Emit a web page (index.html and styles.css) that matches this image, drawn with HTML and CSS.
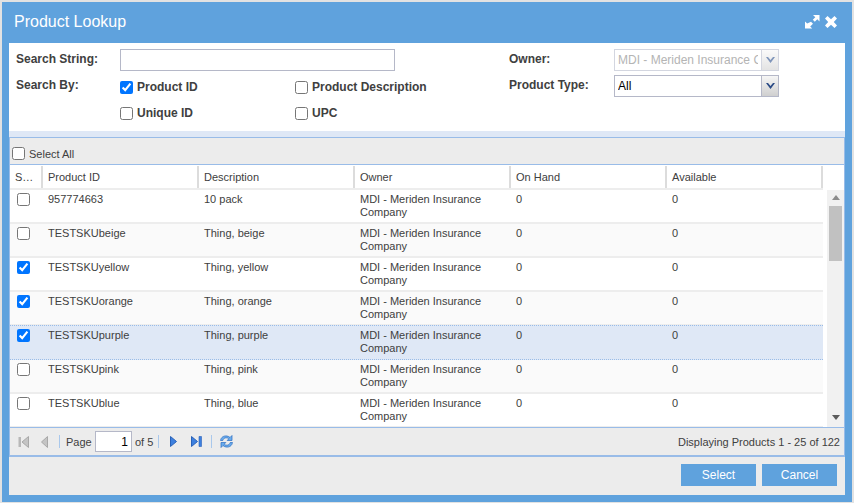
FILE: index.html
```html
<!DOCTYPE html>
<html lang="en">
<head>
<meta charset="utf-8">
<title>Product Lookup</title>
<link rel="stylesheet" href="styles.css">
</head>
<body>
<div class="window">
  <header class="titlebar">
    <h1 class="title">Product Lookup</h1>
    <div class="tools">
      <svg class="tool-expand" width="16" height="16" viewBox="0 0 16 16"><path d="M9 1h6.500v6.500l-2.200-2.200-2.500 2.500-2-2 2.500-2.500zM7 7.800l2 2-2.800 2.800 2 2H1v-7.200l2.200 2.200z" fill="#fff"/></svg>
      <svg class="tool-close" width="12" height="12" viewBox="0 0 12 12"><path d="M2.500 0 6 3.200 9.500 0 12 2.500 8.800 6 12 9.500 9.500 12 6 8.800 2.500 12 0 9.500 3.200 6 0 2.500z" fill="#fff"/></svg>
    </div>
  </header>
  <div class="body">
    <form class="form">
      <div class="form-left">
        <label class="lbl lbl-top">Search String:</label>
        <input class="text-input" type="text">
        <span></span>
        <label class="lbl lbl-by">Search By:</label>
        <label class="check"><input type="checkbox" checked>Product ID</label>
        <label class="check"><input type="checkbox">Product Description</label>
        <span></span>
        <label class="check"><input type="checkbox">Unique ID</label>
        <label class="check"><input type="checkbox">UPC</label>
      </div>
      <div class="form-right">
        <label class="lbl lbl-top">Owner:</label>
        <div class="combo combo-off"><span class="combo-text">MDI - Meriden Insurance Company</span><span class="combo-btn"><svg width="9" height="6" viewBox="0 0 9 6"><path d="M0 0h2l2.500 3L7 0h2L4.500 6z" fill="#7f95ba"/></svg></span></div>
        <label class="lbl lbl-top">Product Type:</label>
        <div class="combo"><span class="combo-text">All</span><span class="combo-btn"><svg width="9" height="6" viewBox="0 0 9 6"><path d="M0 0h2l2.500 3L7 0h2L4.500 6z" fill="#2a4a85"/></svg></span></div>
      </div>
    </form>
    <section class="grid">
      <div class="grid-top"><label class="select-all"><input type="checkbox">Select All</label></div>
      <div class="head">
        <div class="hc hc-s">S…</div><div class="hc">Product ID</div><div class="hc">Description</div><div class="hc">Owner</div><div class="hc">On Hand</div><div class="hc">Available</div>
      </div>
      <div class="grid-main">
        <div class="rows">
          <div class="row"><div class="c c-s"><input type="checkbox"></div><div class="c">957774663</div><div class="c">10 pack</div><div class="c">MDI - Meriden Insurance Company</div><div class="c">0</div><div class="c">0</div></div>
          <div class="row row-alt"><div class="c c-s"><input type="checkbox"></div><div class="c">TESTSKUbeige</div><div class="c">Thing, beige</div><div class="c">MDI - Meriden Insurance Company</div><div class="c">0</div><div class="c">0</div></div>
          <div class="row"><div class="c c-s"><input type="checkbox" checked></div><div class="c">TESTSKUyellow</div><div class="c">Thing, yellow</div><div class="c">MDI - Meriden Insurance Company</div><div class="c">0</div><div class="c">0</div></div>
          <div class="row row-alt"><div class="c c-s"><input type="checkbox" checked></div><div class="c">TESTSKUorange</div><div class="c">Thing, orange</div><div class="c">MDI - Meriden Insurance Company</div><div class="c">0</div><div class="c">0</div></div>
          <div class="row row-sel"><div class="c c-s"><input type="checkbox" checked></div><div class="c">TESTSKUpurple</div><div class="c">Thing, purple</div><div class="c">MDI - Meriden Insurance Company</div><div class="c">0</div><div class="c">0</div></div>
          <div class="row row-alt"><div class="c c-s"><input type="checkbox"></div><div class="c">TESTSKUpink</div><div class="c">Thing, pink</div><div class="c">MDI - Meriden Insurance Company</div><div class="c">0</div><div class="c">0</div></div>
          <div class="row"><div class="c c-s"><input type="checkbox"></div><div class="c">TESTSKUblue</div><div class="c">Thing, blue</div><div class="c">MDI - Meriden Insurance Company</div><div class="c">0</div><div class="c">0</div></div>
        </div>
        <div class="scrollbar">
          <svg class="sb-arrow" width="8" height="5" viewBox="0 0 8 5"><path d="M4 0l4 5H0z" fill="#8c8c8c"/></svg>
          <div class="sb-thumb"></div>
          <svg class="sb-arrow sb-down" width="8" height="5" viewBox="0 0 8 5"><path d="M0 0h8L4 5z" fill="#5c5c5c"/></svg>
        </div>
      </div>
      <div class="paging">
        <svg class="pg-first" width="11" height="12" viewBox="0 0 11 12"><path d="M.5 1H3v10H.5z" fill="#b8b8b8"/><path d="M10.500.5v11L4 6z" fill="#c4c4c4" stroke="#a8a8a8"/></svg>
        <svg class="pg-prev" width="7" height="12" viewBox="0 0 7 12"><path d="M6.500.5v11L.5 6z" fill="#c4c4c4" stroke="#a8a8a8"/></svg>
        <span class="pg-sep pg-sep-1"></span>
        <span class="pg-label">Page</span>
        <input class="pg-input" type="text" value="1">
        <span class="pg-of">of 5</span>
        <span class="pg-sep pg-sep-2"></span>
        <svg class="pg-next" width="7" height="11" viewBox="0 0 7 11"><path d="M.5.500v10l6-5z" fill="#3d80df" stroke="#2a62b8"/></svg>
        <svg class="pg-last" width="11" height="11" viewBox="0 0 11 11"><path d="M.5.500v10l6-5z" fill="#3d80df" stroke="#2a62b8"/><path d="M8 .5h2.500v10H8z" fill="#3d80df" stroke="#2a62b8" stroke-width=".6"/></svg>
        <span class="pg-sep pg-sep-3"></span>
        <svg class="pg-refresh" width="15" height="15" viewBox="0 0 15 15"><path d="M1.500 6.500C2 3 5 1.500 8 2c1.300.2 2.300.8 3 1.500L13 1.500v5H8.200l1.600-1.700C9 4 8 3.800 7 3.800 5.300 3.800 4.300 5 3.800 6.500z" fill="#6aaced" stroke="#2a6cc0" stroke-width=".7"/><path d="M13.500 8.500C13 12 10 13.500 7 13c-1.300-.2-2.300-.8-3-1.500L2 13.500v-5h4.800l-1.600 1.700c.8.8 1.800 1 2.800 1 1.700 0 2.700-1.200 3.200-2.700z" fill="#6aaced" stroke="#2a6cc0" stroke-width=".7"/></svg>
        <span class="pg-info">Displaying Products 1 - 25 of 122</span>
      </div>
    </section>
    <footer class="footer">
      <button class="btn" type="button">Select</button>
      <button class="btn" type="button">Cancel</button>
    </footer>
  </div>
</div>
</body>
</html>
```

FILE: styles.css
```css
* { box-sizing: border-box; }
html, body { height: 100%; }
body {
  margin: 0;
  padding: 2px;
  background: #e2e2e2;
  font-family: "Liberation Sans", Arial, sans-serif;
  font-size: 11px;
  color: #404040;
  overflow: hidden;
}
input[type="checkbox"] { width: 13px; height: 13px; margin: 0; flex: none; }

.window {
  width: 850px;
  height: 500px;
  background: #5fa2dd;
  padding: 0 7px 7px;
  display: flex;
  flex-direction: column;
}
.titlebar {
  height: 41px;
  flex: none;
  display: flex;
  align-items: center;
  justify-content: space-between;
  padding: 0 8px 2px 5px;
}
.title {
  margin: 0;
  font-size: 16px;
  font-weight: 400;
  color: #fff;
}
.tools { display: flex; align-items: center; gap: 5px; }

.body { flex: 1; min-height: 0; background: #ececec; display: flex; flex-direction: column; }

.form {
  height: 88px;
  flex: none;
  background: #fff;
  padding: 6px 0 0 7px;
  display: flex;
}
.form-left {
  width: 493px;
  display: grid;
  grid-template-columns: 104px 175px 1fr;
  grid-template-rows: 22px 29px 23px;
  align-items: center;
}
.form-right {
  display: grid;
  grid-template-columns: 105px 165px;
  grid-template-rows: 22px 22px;
  row-gap: 4px;
  align-items: center;
}
.lbl { font-size: 12px; font-weight: 700; color: #404040; }
.lbl-top { align-self: start; padding-top: 3px; line-height: 15px; }
.lbl-by { align-self: start; padding-top: 7px; line-height: 15px; }
.check {
  display: flex;
  align-items: center;
  gap: 4px;
  font-size: 12px;
  font-weight: 700;
  color: #404040;
  padding-top: 3px;
}
.text-input {
  width: 275px;
  height: 22px;
  border: 1px solid #b5b8c8;
  background: #fff;
  padding: 0 4px;
  margin: 0;
  outline: none;
}
.combo {
  display: flex;
  height: 22px;
  border: 1px solid #b5b8c8;
  background: #fff;
  font-size: 12px;
  color: #000;
}
.combo-text {
  flex: 1;
  min-width: 0;
  white-space: nowrap;
  overflow: hidden;
  margin: 0 3px;
  padding-top: 3px;
  line-height: 15px;
}
.combo-btn {
  width: 17px;
  flex: none;
  border-left: 1px solid #b5b8c8;
  background: linear-gradient(#f6f6f6, #cfcfcf);
  display: flex;
  align-items: center;
  justify-content: center;
}
.combo-off { border-color: #d3d6e0; color: #b4b4b4; }
.combo-off .combo-btn { border-left-color: #d3d6e0; background: linear-gradient(#fafafa, #e3e3e3); }

.grid {
  flex: none;
  height: 320px;
  margin-top: 6px;
  display: flex;
  flex-direction: column;
  border: 1px solid #99bce8;
  border-bottom-width: 2px;
  box-shadow: 0 -6px 0 #dfe8f6;
  background: #fff;
}
.grid-top {
  height: 27px;
  flex: none;
  background: #ececec;
  border-bottom: 1px solid #99bce8;
  padding: 9px 0 0 2px;
}
.select-all { display: flex; align-items: center; gap: 4px; height: 13px; color: #404040; }

.head, .row {
  display: grid;
  grid-template-columns: 32px 156px 156px 156px 156px 156px;
}
.head { height: 25px; flex: none; border-bottom: 2px solid #ededed; background: #fff; width: 813px; padding-left: 1px; }
.hc {
  padding: 5px 5px 0;
  line-height: 13px;
  border-right: 2px solid #dcdcdc;
  white-space: nowrap;
  overflow: hidden;
  margin-top: 1px;
}
.hc-s { padding-left: 4px; }

.grid-main { flex: 1; min-height: 0; display: flex; }
.rows { width: 813px; flex: none; overflow: hidden; }
.row { height: 34px; border-bottom: 2px solid #ededed; width: 813px; }
.row-alt { background: #fafafa; }
.row-sel {
  background: #dfe8f6;
  border-top: 1px dotted #99bce8;
  border-bottom: 1px dotted #99bce8;
  margin-top: -1px;
  height: 35px;
}
.c { padding: 3px 6px 0; line-height: 13px; color: #404040; }
.c-s { padding: 3px 0 0 7px; }

.scrollbar {
  margin-left: 4px;
  width: 17px;
  flex: none;
  background: #f1f1f1;
  display: flex;
  flex-direction: column;
  align-items: center;
}
.sb-arrow { margin-top: 5px; flex: none; }
.sb-thumb { width: 13px; height: 55px; margin-top: 6px; background: #c1c1c1; }
.sb-down { margin-top: auto; margin-bottom: 7px; }

.paging {
  height: 28px;
  flex: none;
  border-top: 1px solid #99bce8;
  background: #ececec;
  display: flex;
  align-items: center;
  padding: 0 4px 0 8px;
}
.pg-first { margin-right: 12px; }
.pg-sep { width: 1px; height: 13px; background: #a9c8ec; flex: none; }
.pg-sep-1 { margin-left: 11px; margin-right: 6px; }
.pg-label { width: 25px; }
.pg-input {
  width: 37px;
  height: 21px;
  margin: 0 3px 0 4px;
  border: 1px solid #b5b8c8;
  background: #fff;
  text-align: right;
  font: 12px "Liberation Sans", Arial, sans-serif;
  padding: 0 3px;
  color: #000;
}
.pg-of { width: 23px; }
.pg-sep-2 { margin-right: 11px; }
.pg-next { margin-right: 14px; }
.pg-sep-3 { margin-left: 9px; margin-right: 7px; }
.pg-info { margin-left: auto; }

.footer {
  flex: 1;
  display: flex;
  justify-content: flex-end;
  gap: 6px;
  padding: 7px 8px 0 0;
}
.btn {
  width: 75px;
  height: 22px;
  border: 0;
  padding: 0;
  background: #5fa2dd;
  color: #fff;
  font: 12px "Liberation Sans", Arial, sans-serif;
}
```
